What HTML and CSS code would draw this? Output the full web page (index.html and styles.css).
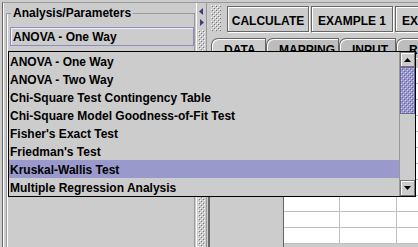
FILE: index.html
```html
<!DOCTYPE html>
<html lang="en">
<head>
    <meta charset="UTF-8">
    <title>Analysis</title>
    <link rel="stylesheet" href="styles.css">
</head>
<body>
    <div class="window">
        <div class="left">
            <fieldset class="params">
                <legend>Analysis/Parameters</legend>
                <div class="combo">ANOVA - One Way</div>
            </fieldset>
        </div>
        <div class="divider">
            <svg class="arrow" width="5" height="7" viewBox="0 0 5 7"><polygon points="4,0 4,7 0,3.5"/></svg>
            <svg class="arrow" width="5" height="7" viewBox="0 0 5 7"><polygon points="1,0 1,7 5,3.5"/></svg>
            <div class="bumps divider-bumps"></div>
        </div>
        <div class="right">
            <div class="toolbar">
                <div class="bumps grip"></div>
                <button class="btn">CALCULATE</button>
                <button class="btn">EXAMPLE 1</button>
                <button class="btn">EXAMPLE 2</button>
            </div>
            <div class="tabs">
                <div class="tab active">DATA</div>
                <div class="tab">MAPPING</div>
                <div class="tab">INPUT</div>
                <div class="tab">RESULT</div>
            </div>
            <div class="tabbody">
                <div class="rowhead"></div>
                <div class="grid">
                    <div class="row"><span></span><span></span><span></span></div>
                    <div class="row"><span></span><span></span><span></span></div>
                    <div class="row"><span></span><span></span><span></span></div>
                    <div class="row"><span></span><span></span><span></span></div>
                    <div class="row"><span></span><span></span><span></span></div>
                    <div class="row"><span></span><span></span><span></span></div>
                    <div class="row"><span></span><span></span><span></span></div>
                    <div class="row"><span></span><span></span><span></span></div>
                    <div class="row"><span></span><span></span><span></span></div>
                    <div class="row"><span></span><span></span><span></span></div>
                    <div class="row"><span></span><span></span><span></span></div>
                </div>
            </div>
        </div>
    </div>

    <!-- combo box popup, open over the window -->
    <div class="popup">
        <ul class="list">
            <li>ANOVA - One Way</li>
            <li>ANOVA - Two Way</li>
            <li>Chi-Square Test Contingency Table</li>
            <li>Chi-Square Model Goodness-of-Fit Test</li>
            <li>Fisher's Exact Test</li>
            <li>Friedman's Test</li>
            <li class="selected">Kruskal-Wallis Test</li>
            <li>Multiple Regression Analysis</li>
        </ul>
        <div class="vscroll">
            <div class="sbtn"><svg width="7" height="4" viewBox="0 0 7 4"><polygon points="3.5,0 7,4 0,4"/></svg></div>
            <div class="bumps thumb"></div>
            <div class="track"></div>
            <div class="sbtn"><svg width="7" height="4" viewBox="0 0 7 4"><polygon points="0,0 7,0 3.5,4"/></svg></div>
        </div>
    </div>
</body>
</html>
```

FILE: styles.css
```css
body {
    margin: 0;
    width: 418px;
    height: 247px;
    overflow: hidden;
    position: relative;
    background-color: #cccccc;
    font-family: "Liberation Sans", Arial, sans-serif;
    font-size: 12px;
    font-weight: bold;
    color: #000;
}
.window {
    display: flex;
    height: 244px;
    margin: 2px 0 0 2px;
    border-top: 1px solid #999;
    border-left: 1px solid #666;
}
.bumps {
    background-color: #cccccc;
    background-image:
        conic-gradient(at 1px 1px, transparent 75%, #fff 0),
        conic-gradient(at 1px 1px, transparent 75%, #fff 0),
        conic-gradient(at 1px 1px, transparent 75%, #777 0),
        conic-gradient(at 1px 1px, transparent 75%, #777 0);
    background-size: 4px 4px;
    background-position: 0 0, 2px 2px, 1px 1px, 3px 3px;
}

/* left side */
.left {
    width: 193px;
    flex-shrink: 0;
    overflow: hidden;
    border-left: 1px solid #fff;
    box-sizing: border-box;
}
.params {
    margin: 3px 0 0 2px;
    padding: 0 0 0 3px;
    width: 189px;
    height: 260px;
    box-sizing: border-box;
    border: 1px solid #999;
    box-shadow: inset 1px 0 0 #fff;
}
.params legend {
    margin-left: 1px;
    padding: 0 2px;
    line-height: 14px;
}
.combo {
    margin-top: 7px;
    width: 184px;
    height: 19px;
    box-sizing: border-box;
    padding: 2px 0 0 2px;
    line-height: 15px;
    border: 1px solid #8c8cbf;
    box-shadow: inset 1px 1px 0 #eeeeff;
    white-space: nowrap;
}

/* split pane divider */
.divider {
    width: 11px;
    flex-shrink: 0;
    box-sizing: border-box;
    border-left: 1px solid #fff;
    border-right: 1px solid #999;
    display: flex;
    flex-direction: column;
    align-items: center;
    padding-top: 5px;
}
.arrow {
    fill: #3d3d7a;
    margin-bottom: 4px;
}
.divider-bumps {
    width: 7px;
    flex: 1;
}

/* right side */
.right {
    flex: 1;
    display: flex;
    flex-direction: column;
    padding-left: 1px;
}
.toolbar {
    display: flex;
    align-items: flex-start;
    height: 33px;
    padding-left: 3px;
    gap: 2px;
}
.grip {
    width: 10px;
    height: 26px;
    margin-top: 2px;
    margin-right: 4px;
}
.btn {
    flex-shrink: 0;
    width: 82px;
    height: 26px;
    margin-top: 3px;
    padding: 3px 0 0;
    line-height: 21px;
    box-sizing: border-box;
    font: inherit;
    color: #000;
    background-color: #cccccc;
    border: 1px solid #666;
    box-shadow: inset 1px 1px 0 #fff, 1px 1px 0 #fff;
    text-align: center;
    white-space: nowrap;
    overflow: hidden;
}
.tabs {
    display: flex;
    margin-top: 2px;
    padding-left: 3px;
    height: 20px;
}
.tab {
    flex-shrink: 0;
    height: 20px;
    padding: 3px 10px 0 12px;
    line-height: 17px;
    box-sizing: border-box;
    border: 1px solid #666;
    border-bottom: none;
    border-top-left-radius: 7px;
    box-shadow: inset 1px 1px 0 #fff;
    background-color: #bdbdbd;
    white-space: nowrap;
}
.tab.active {
    width: 55px;
    background-color: #cccccc;
}
.tab:nth-child(2) { width: 73px; }
.tab:nth-child(3) { width: 57px; }
.tabbody {
    flex: 1;
    display: flex;
    border-left: 2px solid #666;
    border-top: 1px solid #fff;
}
.rowhead {
    width: 73px;
    flex-shrink: 0;
    border-right: 1px solid #666;
}
.grid {
    flex: 1;
    padding-top: 9px;
}
.row {
    display: flex;
    height: 16px;
    box-sizing: border-box;
    background-color: #fff;
    border-bottom: 1px solid #c0c0c0;
}
.row span {
    width: 56px;
    flex-shrink: 0;
    border-right: 1px solid #c0c0c0;
    box-sizing: border-box;
}
.row span:nth-child(2) { width: 57px; }
.row span:last-child { flex: 1; border-right: none; }

/* popup list */
.popup {
    position: absolute;
    left: 8px;
    top: 51px;
    width: 408px;
    height: 146px;
    box-sizing: border-box;
    border: 1px solid #000;
    background-color: #cccccc;
    display: flex;
}
.list {
    flex: 1;
    margin: 0;
    padding: 0;
    list-style: none;
}
.list li {
    height: 18px;
    box-sizing: border-box;
    padding: 2px 0 0 1px;
    line-height: 16px;
    white-space: nowrap;
}
.list li.selected {
    background-color: #9999cc;
}
.vscroll {
    width: 16px;
    flex-shrink: 0;
    box-sizing: border-box;
    border-left: 1px solid #999;
    display: flex;
    flex-direction: column;
}
.sbtn {
    height: 16px;
    flex-shrink: 0;
    box-sizing: border-box;
    border: 1px solid #777;
    box-shadow: inset 1px 1px 0 #fff;
    display: flex;
    align-items: center;
    justify-content: center;
}
.sbtn:first-child {
    height: 15px;
}
.thumb {
    height: 47px;
    flex-shrink: 0;
    box-sizing: border-box;
    border: 1px solid #666699;
    background-color: #9999cc;
    background-image:
        conic-gradient(at 1px 1px, transparent 75%, #ccccff 0),
        conic-gradient(at 1px 1px, transparent 75%, #ccccff 0),
        conic-gradient(at 1px 1px, transparent 75%, #666699 0),
        conic-gradient(at 1px 1px, transparent 75%, #666699 0);
}
.track {
    flex: 1;
}
```
